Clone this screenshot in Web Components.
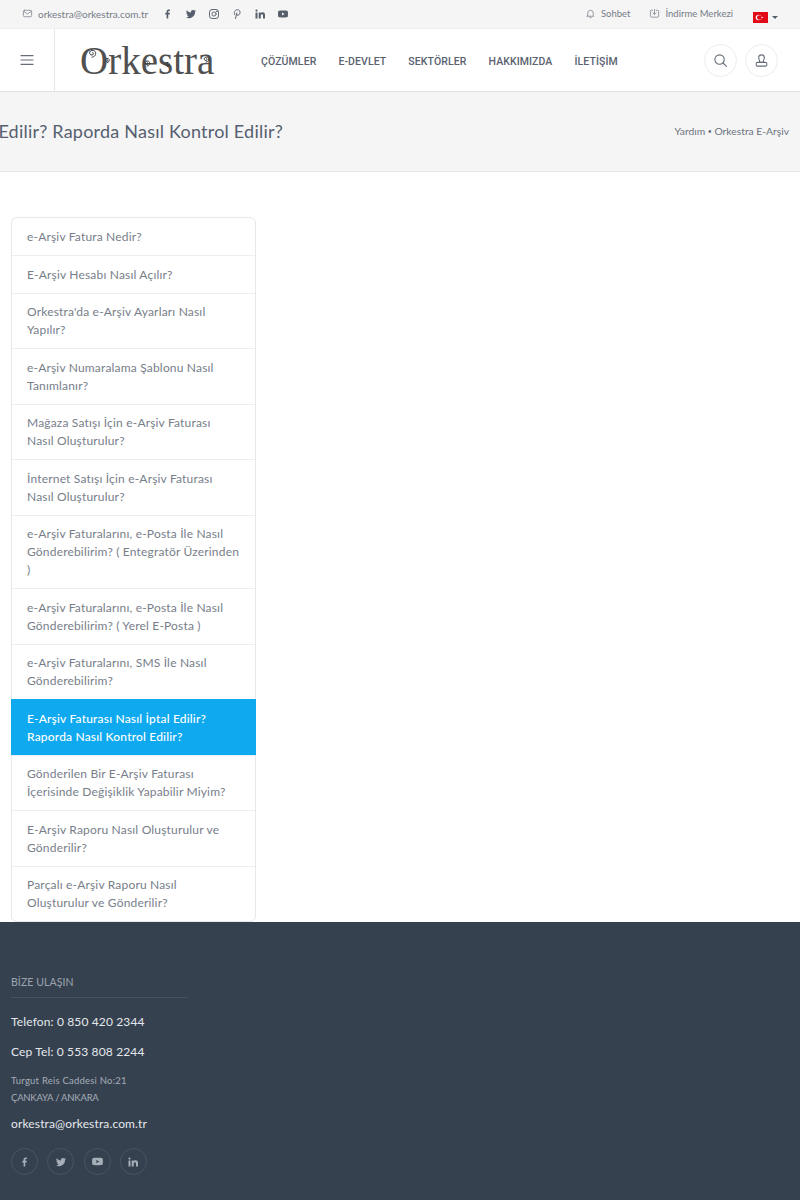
<!DOCTYPE html>
<html lang="tr"><head><meta charset="utf-8"><title>Orkestra</title>
<style>html,body{margin:0;padding:0;background:#fff;font-family:"Lato","Noto Sans",sans-serif}</style>
</head><body>
<site-topbar></site-topbar>
<site-header></site-header>
<page-title heading="E-Arşiv Faturası Nasıl İptal Edilir? Raporda Nasıl Kontrol Edilir?"></page-title>
<side-menu></side-menu>
<site-footer></site-footer>
<script>
const F='M9.2 21v-8.2H6.6V9.6h2.6V7.4C9.2 4.600 10.800 3 13.300 3c1.200 0 2.200.1 2.500.1V6h-1.700c-1.300 0-1.600.6-1.600 1.600v2h3.200l-.4 3.200h-2.800V21z';
const T='M22 5.900c-.7.3-1.500.5-2.400.6.9-.5 1.500-1.300 1.800-2.300-.8.5-1.700.8-2.600 1A4.100 4.100 0 0 0 11.800 9C8.400 8.800 5.300 7.200 3.300 4.700c-1.100 1.900-.5 4.300 1.300 5.500-.7 0-1.300-.2-1.900-.5 0 2 1.400 3.700 3.300 4.100-.6.200-1.200.2-1.900.1.500 1.600 2 2.800 3.800 2.800A8.300 8.300 0 0 1 2 18.400 11.700 11.700 0 0 0 20 8c.8-.6 1.500-1.300 2-2.100z';
const Y='M21.600 7.200a2.500 2.500 0 0 0-1.800-1.800C18.200 5 12 5 12 5s-6.200 0-7.800.4a2.500 2.500 0 0 0-1.800 1.800C2 8.800 2 12 2 12s0 3.200.4 4.800c.2.900.9 1.600 1.800 1.800C5.800 19 12 19 12 19s6.200 0 7.800-.4c.9-.2 1.600-.9 1.800-1.800.4-1.600.4-4.800.4-4.800s0-3.200-.4-4.800zM10 15V9l5.200 3z';
const L='M3 9h4v12H3zM5 3a2.200 2.200 0 1 1 0 4.400A2.200 2.200 0 0 1 5 3zM9.500 9h3.800v1.700c.6-1 1.900-2 3.800-2 4 0 4.900 2.600 4.900 6V21h-4v-5.600c0-1.400 0-3.100-1.900-3.100s-2.600 1.500-2.600 3V21h-4z';
const fill=(d,s,c='currentColor')=>`<svg width="${s}" height="${s}" viewBox="0 0 24 24" fill="${c}"><path fill-rule="evenodd" d="${d}"/></svg>`;
const stroke=(inner,s,w=1.6)=>`<svg width="${s}" height="${s}" viewBox="0 0 24 24" fill="none" stroke="currentColor" stroke-width="${w}" stroke-linecap="round" stroke-linejoin="round">${inner}</svg>`;

class SiteTopbar extends HTMLElement{constructor(){super();this.attachShadow({mode:'open'}).innerHTML=`<style>
:host{display:flex;align-items:center;height:29px;box-sizing:border-box;background:#f5f5f5;color:#767c88;font:400 9.500px/14px "Lato","Noto Sans",sans-serif;padding:0 22px 1px 22px;border-bottom:1px solid #eee}
.g{display:flex;align-items:center}.mail{gap:5px;margin-right:14px}.mail span{font-size:10px;letter-spacing:-.02px}
.soc{gap:11px;color:#565e6c}.soc svg{display:block}
.r{margin-left:auto;gap:19px}.i{display:flex;align-items:center;gap:5px}
.flag{display:flex;align-items:center;gap:4px;margin:7px 0 0 1px}
.car{width:0;height:0;border:3px solid transparent;border-top:3px solid #565e6c;border-bottom:0}
</style>
<div class="g mail">${stroke('<rect x="3" y="5" width="18" height="14" rx="2.500"/><path d="M4 7.500l8 5.500 8-5.500"/>',11)}<span>orkestra@orkestra.com.tr</span></div>
<div class="g soc">${fill(F,12)}${fill(T,12)}${stroke('<rect x="3" y="3" width="18" height="18" rx="5"/><circle cx="12" cy="12" r="4.200"/><circle cx="17.300" cy="6.700" r=".6"/>',12,1.800)}${stroke('<path d="M9 21l2.600-11M7.300 13.500C5.200 10 7.300 3.500 12.500 3.500c4.200 0 6 3 5.500 6-.5 3.200-2.300 5-4.300 5-1.300 0-2.300-.8-2.500-1.800"/>',12,1.900)}${fill(L,12)}${fill(Y,12)}</div>
<div class="g r"><div class="i">${stroke('<path d="M6 16.500V11a6 6 0 0 1 12 0v5.500l1.500 1.500h-15z"/><path d="M10.500 21h3"/>',11)}<span>Sohbet</span></div>
<div class="i">${stroke('<path d="M8 5H5a2 2 0 0 0-2 2v11a2 2 0 0 0 2 2h14a2 2 0 0 0 2-2V7a2 2 0 0 0-2-2h-3"/><path d="M12 3v11M8.500 10.500L12 14l3.500-3.500"/>',11)}<span>İndirme Merkezi</span></div>
<div class="flag"><svg width="15" height="11" viewBox="0 0 15 11"><rect width="15" height="11" fill="#e30a17"/><circle cx="5.500" cy="5.500" r="2.800" fill="#fff"/><circle cx="6.200" cy="5.500" r="2.200" fill="#e30a17"/><path d="M8 5.500l2.200-.8-1.300 1.900V4.400l1.300 1.900z" fill="#fff"/></svg><span class="car"></span></div></div>`}}
customElements.define('site-topbar',SiteTopbar);

const spiral=(x,y,r=3)=>`<path d="M${x} ${y}c${r*.35} ${-r*.3} ${r*.6} ${r*.35} ${r*.05} ${r*.5}c${-r*.8} ${r*.15} ${-r*.9} ${-r*1.050} ${-r*.05} ${-r*1.150}c${r*1.250} ${-r*.1} ${r*1.250} ${r*1.600} ${-r*.1} ${r*1.700}"/>`;
class SiteHeader extends HTMLElement{constructor(){super();
const items=['ÇÖZÜMLER','E-DEVLET','SEKTÖRLER','HAKKIMIZDA','İLETİŞİM'];
this.attachShadow({mode:'open'}).innerHTML=`<style>
:host{display:flex;align-items:center;height:63px;box-sizing:border-box;background:#fff;border-bottom:1px solid #e3e3e3;color:#5a6270;font-family:"Lato","Noto Sans",sans-serif}
.burger{width:55px;height:100%;box-sizing:border-box;border-right:1px solid #e8e8e8;display:flex;align-items:center;justify-content:center;flex:none;color:#666d78}
.logo{position:relative;width:206px;height:100%;flex:none;box-sizing:border-box;padding:10px 0 0 25px;font:400 39px/44px "Liberation Serif",serif;color:#505050;white-space:nowrap}
.logo svg{position:absolute;left:0;top:0;color:#3a3a3a}
nav{display:flex;gap:22px;padding-top:3px;font:500 10.500px/14px "Roboto","Lato",sans-serif;letter-spacing:.1px;white-space:nowrap}
.btns{margin-left:auto;display:flex;gap:8px;padding-right:22px}
.b{width:33px;height:33px;box-sizing:border-box;border:1px solid #ececec;border-radius:50%;display:flex;align-items:center;justify-content:center;color:#666d78}
</style>
<div class="burger">${stroke('<path d="M3 5.500h18M3 12h18M3 18.500h18"/>',16,1.800)}</div>
<div class="logo"><span>Orkestra</span><svg width="206" height="62" viewBox="0 0 206 62" fill="none" stroke="currentColor" stroke-width="1">${spiral(37,24,4)}${spiral(52,31,2.500)}${spiral(92,34,3)}${spiral(112,35,2.500)}${spiral(151,30,3)}</svg></div>
<nav>${items.map(i=>`<span>${i}</span>`).join('')}</nav>
<div class="btns"><div class="b">${stroke('<circle cx="10.500" cy="10.500" r="7.500"/><path d="M16 16l5.500 5.500"/>',15,1.700)}</div><div class="b">${stroke('<path d="M12 3a4.500 4.500 0 0 1 4.500 4.500c0 2.500-1.500 3.500-1.500 5.500 0 1 .3 1.500 1 2h-8c.7-.5 1-1 1-2 0-2-1.500-3-1.500-5.500A4.500 4.500 0 0 1 12 3z"/><rect x="3.500" y="15" width="17" height="6" rx="2"/>',15,1.700)}</div></div>`}}
customElements.define('site-header',SiteHeader);

class PageTitle extends HTMLElement{constructor(){super();this.attachShadow({mode:'open'})}
connectedCallback(){this.shadowRoot.innerHTML=`<style>
:host{display:flex;align-items:center;height:80px;box-sizing:border-box;background:#f5f5f5;border-bottom:1px solid #e6e6e6;color:#566070;font-family:"Lato","Noto Sans",sans-serif;padding:0 11px 2px 0;overflow:hidden}
.t{flex:0 0 283px;display:flex;justify-content:flex-end;overflow:hidden}
h1{margin:0;font-size:18px;font-weight:400;line-height:24px;white-space:nowrap;letter-spacing:.22px;flex:none}
.c{margin-left:auto;font-size:10.300px;color:#6b7280}
.c i{font-style:normal;font-size:7px;vertical-align:1px}
</style><div class="t"><h1>${this.getAttribute('heading')}</h1></div><div class="c">Yardım <i>•</i> Orkestra E-Arşiv</div>`}}
customElements.define('page-title',PageTitle);

class MenuItem extends HTMLElement{constructor(){super();this.attachShadow({mode:'open'}).innerHTML=`<style>
:host{display:block;box-sizing:border-box;padding:9.750px 15px 8.750px 15px;border-top:1px solid #eceef1;font-size:12px;line-height:18px;color:#777e8a;letter-spacing:.18px}
:host(:first-child){border-top:0;padding-top:10.250px}
:host([active]){background:#0fa9ef;color:#fff;border-top-color:#0fa9ef;font-weight:500;margin:0 -1px;padding-left:16px;padding-right:16px}
</style><slot></slot>`}}
customElements.define('menu-item',MenuItem);

class SideMenu extends HTMLElement{constructor(){super();
const rows=['e-Arşiv Fatura Nedir?','E-Arşiv Hesabı Nasıl Açılır?','Orkestra\'da e-Arşiv Ayarları Nasıl Yapılır?','e-Arşiv Numaralama Şablonu Nasıl Tanımlanır?','Mağaza Satışı İçin e-Arşiv Faturası Nasıl Oluşturulur?','İnternet Satışı İçin e-Arşiv Faturası Nasıl Oluşturulur?','e-Arşiv Faturalarını, e-Posta İle Nasıl Gönderebilirim? ( Entegratör Üzerinden )','e-Arşiv Faturalarını, e-Posta İle Nasıl Gönderebilirim? ( Yerel E-Posta )','e-Arşiv Faturalarını, SMS İle Nasıl Gönderebilirim?','*E-Arşiv Faturası Nasıl İptal Edilir? Raporda Nasıl Kontrol Edilir?','Gönderilen Bir E-Arşiv Faturası İçerisinde Değişiklik Yapabilir Miyim?','E-Arşiv Raporu Nasıl Oluşturulur ve Gönderilir?','Parçalı e-Arşiv Raporu Nasıl Oluşturulur ve Gönderilir?'];
this.attachShadow({mode:'open'}).innerHTML=`<style>
:host{display:block;padding:45px 0 0 11px;width:245px}
.l{border:1px solid #e6e8eb;border-radius:6px;background:#fff}
</style><div class="l">${rows.map(r=>r[0]=='*'?`<menu-item active>${r.slice(1)}</menu-item>`:`<menu-item>${r}</menu-item>`).join('')}</div>`}}
customElements.define('side-menu',SideMenu);

class SiteFooter extends HTMLElement{constructor(){super();this.attachShadow({mode:'open'}).innerHTML=`<style>
:host{display:block;height:278px;box-sizing:border-box;background:#364150;color:#e4e8ec;padding:53px 11px 0;font-family:"Lato","Noto Sans",sans-serif}
.h{width:177px;font-size:10.500px;line-height:14px;color:#9aa3ae;letter-spacing:.08px;padding-bottom:8px;border-bottom:1px solid #465261}
.p{font-size:12px;line-height:18px;letter-spacing:.14px}
.a{font-size:9.500px;line-height:17px;color:#a5adb7;letter-spacing:.22px}
.a span{letter-spacing:-.22px}
.s{display:flex;gap:9.330px;margin-top:15px}
.s div{width:27px;height:27px;box-sizing:border-box;border:1px solid #4a5665;border-radius:50%;display:flex;align-items:center;justify-content:center;color:#a5adb7}
</style><div class="h">BİZE ULAŞIN</div>
<div class="p" style="margin-top:15px">Telefon: 0 850 420 2344</div>
<div class="p" style="margin-top:12px">Cep Tel: 0 553 808 2244</div>
<div class="a" style="margin-top:11px">Turgut Reis Caddesi No:21<br><span>ÇANKAYA / ANKARA</span></div>
<div class="p" style="margin-top:9px">orkestra@orkestra.com.tr</div>
<div class="s"><div>${fill(F,12)}</div><div>${fill(T,12)}</div><div>${fill(Y,13)}</div><div>${fill(L,12)}</div></div>`}}
customElements.define('site-footer',SiteFooter);
</script>
</body></html>
